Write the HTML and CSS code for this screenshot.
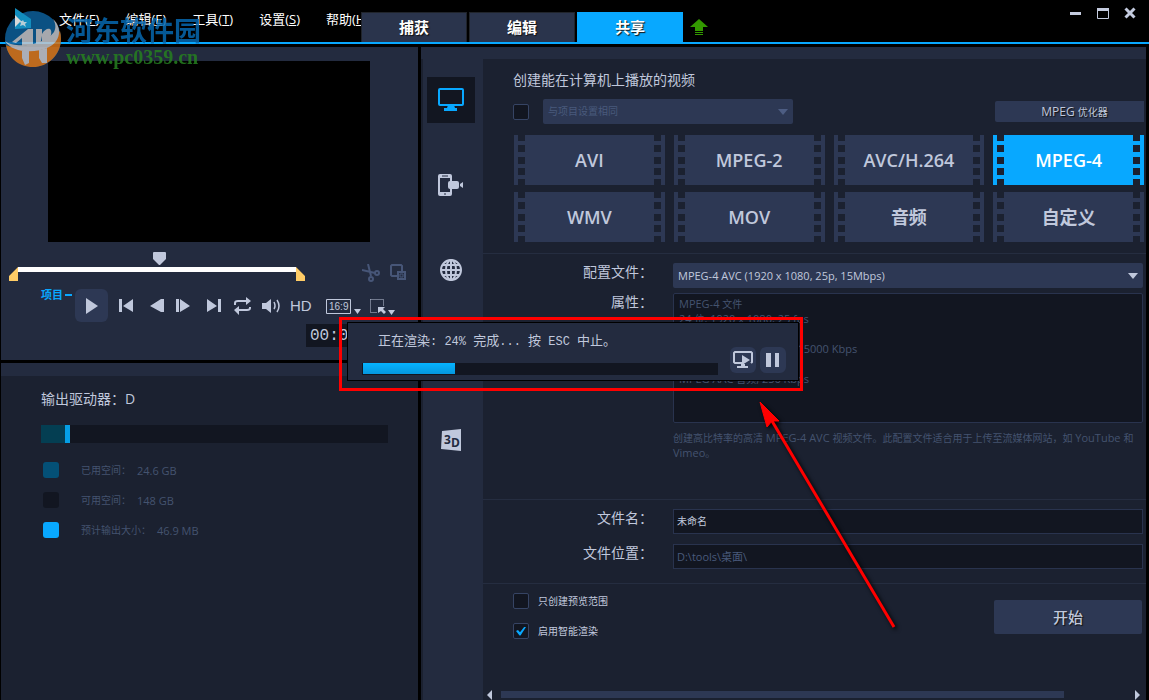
FILE: index.html
```html
<!DOCTYPE html>
<html lang="zh-CN">
<head>
<meta charset="utf-8">
<title>共享</title>
<link rel="stylesheet" href="styles.css">
</head>
<body>
<div class="app">
  <header class="topbar">
    <nav class="menu">
      <button>文件(<u>F</u>)</button>
      <button>编辑(<u>E</u>)</button>
      <button>工具(<u>T</u>)</button>
      <button>设置(<u>S</u>)</button>
      <button>帮助(<u>H</u>)</button>
    </nav>
    <div class="tabs">
      <button class="tab">捕获</button>
      <button class="tab">编辑</button>
      <button class="tab active">共享</button>
      <svg class="upgrade" width="18" height="18" viewBox="0 0 18 18"><path d="M9 0 18 8H13V12H5V8H0ZM5 13H13V14H5ZM5 15H13V16H5Z" fill="#339900"/></svg>
    </div>
    <div class="window-buttons">
      <button aria-label="最小化"><svg width="12" height="12"><path d="M0 5H11V8H0Z" fill="#c4cbdf"/></svg></button>
      <button aria-label="最大化"><svg width="12" height="12"><path d="M.5 1.500H11.500V11.500H.5Z" fill="none" stroke="#c4cbdf"/><path d="M0 1H12V4H0Z" fill="#c4cbdf"/></svg></button>
      <button aria-label="关闭"><svg width="12" height="12"><path d="M1.500 1.500 10.500 10.500M10.500 1.500 1.500 10.500" stroke="#c4cbdf" stroke-width="3"/></svg></button>
    </div>
    <div class="watermark">
      <svg width="58" height="62" viewBox="0 0 58 62">
        <circle cx="28" cy="31" r="28" fill="#0d609b"/>
        <path d="M1 37C14 43 40 39 55 23C60 43 45 59 28 59C13 59 3 49 1 37Z" fill="#d97519"/>
        <path d="M10 0 26 11V20L10 21Z" fill="#16a6e0"/><path d="M10 7 16 13 10 19Z" fill="#fff"/>
        <path d="M0 33C10 41 38 38 49 24C51 20 51 16 48 11C58 20 55 34 44 39C30 46 7 45 0 33Z" fill="#c3c6cc"/>
        <path d="M7 34 23 21H28V37L17 38V30L11 35ZM17 43H24V55L20 57 17 50ZM31 21H37V26C40 20 48 18 46 27L43 34 37 36V28L35 37H31ZM34 42 42 40V55H37L34 50Z" fill="#c3c6cc"/>
        <path d="m18 12 1 2 3 0-2 2 1 3-3-2-3 1 1-3-2-2 3 0Z" fill="#d5f2fd"/>
      </svg>
      <div class="watermark-text"><span class="site-name">河东软件园</span><span class="site-url">www.pc0359.cn</span></div>
    </div>
  </header>

  <div class="workspace">
    <div class="left">
      <section class="preview">
        <div class="screen"></div>
        <div class="trim">
          <svg class="trim-range" width="296" height="30" viewBox="0 0 296 30"><path d="M9 15H287V20H9Z" fill="#fff"/><path d="M9 15V29H0V24ZM287 15V29H296V24Z" fill="#fc6"/><path d="M144 1Q144 0 145 0H156Q157 0 157 1V7L151 13H150L144 7Z" fill="#c0c8dc"/></svg>
          <div class="trim-tools">
            <svg width="18" height="18" viewBox="0 0 18 18" fill="none" stroke="#475678" stroke-width="2"><path d="M6 0 9 12M0 6 13 9"/><circle cx="9" cy="15" r="2"/><circle cx="15" cy="9" r="2"/></svg>
            <svg width="17" height="17" viewBox="0 0 17 17" fill="none" stroke="#475678" stroke-width="2"><path d="M7 12H2L1 11V2L2 1H11L12 2V7"/><path d="M8 8H15V15H8Z"/><path d="M10 10H13V13H10Z" stroke-width="1"/></svg>
          </div>
        </div>
        <div class="transport">
          <span class="mode">项目</span><i class="mode-dash"></i>
          <button class="play" aria-label="播放"><svg width="12" height="16"><path d="M0 0 12 8 0 16Z" fill="#c0c8dc"/></svg></button>
          <svg class="controls" width="300" height="34" viewBox="0 0 300 34" fill="#c0c8dc">
            <path d="M11 10H14V23H11ZM25 10V23L15 17ZM42 17 53 10V23ZM53 10H56V23H53ZM68 10H71V23H68ZM72 10 82 17 72 23ZM99 10 109 17 99 23ZM110 10H113V23H110Z"/>
            <path d="M127 16V14Q127 12 130 12H139M142 18V19Q142 21 139 21H130" fill="none" stroke="#c0c8dc" stroke-width="2"/><path d="m138 8 5 4-5 4ZM131 17 126 21 131 26Z"/>
            <path d="M154 14H158L163 10V24L158 20H154Z"/><path d="M166 13Q168 17 166 20M169 11Q173 17 169 23" fill="none" stroke="#c0c8dc" stroke-width="1.500"/>
            <path d="M218.500 10.500H242.500V24.500H218.500Z" fill="none" stroke="#c0c8dc"/>
            <path d="M246 20H253L249.500 25ZM280 21H287L283.500 26Z"/>
            <path d="M262.500 10.500H275.500V17M262.500 10.500V23.500H269" fill="none" stroke="#c0c8dc" stroke-dasharray="1 1"/><path d="M270 18H277L275 20 278 23 276 25 273 22 270 24Z"/>
            <text x="182" y="22" font-size="15">HD</text><text x="221" y="21" font-size="10">16:9</text>
          </svg>
        </div>
        <div class="timecode">00:00:00</div>
      </section>
      <section class="drive">
        <div class="drive-head"></div>
        <h2>输出驱动器：<span>D</span></h2>
        <div class="drive-bar"><i style="width:7%"></i><b></b></div>
        <ul>
          <li><i class="used"></i>已用空间：<span>24.6 GB</span></li>
          <li><i class="free"></i>可用空间：<span>148 GB</span></li>
          <li><i class="estimated"></i>预计输出大小：<span>46.9 MB</span></li>
        </ul>
      </section>
    </div>

    <div class="right">
      <nav class="targets">
        <button class="selected" aria-label="计算机"><svg width="26" height="24" viewBox="0 0 26 24"><rect x="1" y="1" width="24" height="16" rx="1" fill="none" stroke="#08a8ff" stroke-width="2"/><path d="M10 17H16L17 20H19V23H6V20H9Z" fill="#08a8ff"/></svg></button>
        <button aria-label="设备"><svg width="26" height="23" viewBox="0 0 26 23"><path d="M2 0H12Q14 0 14 2V7H12V4H2V18H12V15H14V20Q14 22 12 22H2Q0 22 0 20V2Q0 0 2 0Z" fill="#c0c8dc"/><rect x="10" y="7" width="11" height="8" rx="2" fill="#c0c8dc"/><path d="M22 10 25 8V14L22 12Z" fill="#c0c8dc"/><path d="M4 2H10M6 20H8" stroke="#232b3f"/></svg></button>
        <button aria-label="网络"><svg width="22" height="22" viewBox="0 0 22 22" fill="none" stroke="#c0c8dc" stroke-width="2"><circle cx="11" cy="11" r="10"/><ellipse cx="11" cy="11" rx="5" ry="10"/><path d="M11 1V21M1 11H21M3 6H19M3 16H19"/></svg></button>
        <button aria-label="DVD"></button>
        <button aria-label="3D 影片"><svg width="20" height="22" viewBox="0 0 20 22"><path d="M1 2 20 0V22L0 20Z" fill="#c0c8dc"/><text x="3" y="15" class="three-d">3</text><text x="10" y="18" class="three-d">D</text></svg></button>
      </nav>
      <main>
        <section class="formats">
          <h1>创建能在计算机上播放的视频</h1>
          <div class="same-row">
            <input type="checkbox" aria-label="与项目设置相同">
            <div class="select small dim"><select aria-label="项目设置" disabled><option>与项目设置相同</option></select></div>
            <button class="optimizer">MPEG <span class="cn">优化器</span></button>
          </div>
          <div class="film-grid">
            <button class="film">AVI</button><button class="film">MPEG-2</button><button class="film">AVC/H.264</button><button class="film on">MPEG-4</button>
            <button class="film">WMV</button><button class="film">MOV</button><button class="film">音频</button><button class="film">自定义</button>
          </div>
        </section>
        <section class="profile form">
          <label for="profile">配置文件：</label>
          <div class="select"><select id="profile"><option>MPEG-4 AVC (1920 x 1080, 25p, 15Mbps)</option></select></div>
          <span class="label">属性：</span>
          <div class="properties">MPEG-4 <span class="cn">文件</span><br>24 <span class="cn">位</span>, 1920 x 1080, 25 fps<br><br><span class="cn">视频数据速率：可变 (最高</span> 15000 Kbps<br><br>MPEG AAC <span class="cn">音频</span>, 256 Kbps</div>
          <p><span class="cn">创建高比特率的高清</span> MPEG-4 AVC <span class="cn">视频文件。此配置文件适合用于上传至流媒体网站，如</span> YouTube <span class="cn">和</span> Vimeo<span class="cn">。</span></p>
        </section>
        <section class="file form">
          <label for="name">文件名：</label><input id="name" class="cn" type="text" value="未命名">
          <label for="location">文件位置：</label><input id="location" class="dim" type="text" value="D:\tools\桌面\">
        </section>
        <section class="render">
          <div class="options">
            <label><input type="checkbox"><span>只创建预览范围</span></label>
            <label><input type="checkbox" checked><span>启用智能渲染</span></label>
          </div>
          <button class="start">开始</button>
        </section>
        <div class="scrollbar"><svg width="6" height="10"><path d="M5 0V10L0 5Z" fill="#c0c8dc"/></svg><div class="track"><i></i></div><svg width="6" height="10"><path d="M0 0V10L5 5Z" fill="#c0c8dc"/></svg></div>
      </main>
    </div>
  </div>

  <div class="callout">
    <div class="dialog" role="dialog" aria-label="正在渲染">
      <div class="status">
        <p><span>正在渲染</span>: 24% <span>完成</span>... <span>按</span> ESC <span>中止。</span></p>
        <div class="progress"><i style="width:26%"></i></div>
      </div>
      <button aria-label="预览"><svg width="20" height="18" viewBox="0 0 20 18"><path d="M11 12H2L1 11V2L2 1H18L19 2V11L18 12" fill="none" stroke="#c0c8dc" stroke-width="2"/><path d="M9 4 17 9 9 14ZM8 13H12V15H15V17H4V15H8Z" fill="#c0c8dc"/></svg></button>
      <button aria-label="暂停"><svg width="14" height="14"><path d="M0 0H5V14H0ZM9 0H13V14H9Z" fill="#c0c8dc"/></svg></button>
    </div>
  </div>
  <svg class="arrow" width="140" height="230" viewBox="0 0 140 230"><path d="M13 20 135 226" stroke="#f00" stroke-width="3"/><path d="M1 1 20 20 13 20 8 26Z" fill="#f00" stroke="#f00"/></svg>
</div>
</body>
</html>
```

FILE: styles.css
```css
:root {
  --panel: #232b3f;
  --dark: #1b2130;
  --control: #2d3854;
  --well: #121621;
  --text: #c0c8dc;
  --dim: #44536f;
  --blue: #08a8ff;
}
* { box-sizing: border-box; margin: 0; padding: 0; }
body { background: #000; color: var(--text); font: 11px/15px "Open Sans", "Noto Sans CJK SC", sans-serif; }
button, input, select { font: inherit; color: inherit; border: 0; background: none; }
svg { display: block; flex: none; }
i { display: block; }
.cn { font-size: 10px; line-height: 10px; }
.app { position: relative; display: flex; flex-direction: column; min-height: 100vh; overflow: hidden; }

.topbar { position: relative; display: flex; height: 44px; border-bottom: 2px solid var(--blue); }
.menu { display: flex; flex: none; width: 361px; height: 38px; padding-left: 59px; gap: 26px; overflow: hidden; color: #fff; font-size: 13px; }
.menu button { flex: none; white-space: nowrap; }
.tabs { display: flex; gap: 2px; align-items: flex-end; }
.tab { width: 106px; height: 30px; background: #2a344c; border: 1px solid #20242b; border-bottom: 0; color: #fff; font-size: 15px; font-weight: bold; text-shadow: 1px 1px 1px #111; }
.tab.active { background: var(--blue); border-color: var(--blue); }
.upgrade { margin: 0 0 5px 5px; }
.window-buttons { display: flex; gap: 15px; margin-left: auto; padding: 6px 13px 0 0; height: 20px; }
.watermark { position: absolute; left: 5px; top: 8px; display: flex; gap: 3px; z-index: 2; opacity: .85; }
.watermark-text { display: flex; flex-direction: column; padding-top: 6px; font-weight: bold; }
.site-name { color: #0668b0; font-size: 27px; line-height: 33px; }
.site-url { color: #268020; font-family: "Liberation Serif", serif; font-size: 20px; line-height: 20px; }

.workspace { display: grid; grid-template-columns: 417fr 725fr; gap: 3px; flex: 1; padding: 3px 3px 0 1px; }
.left { display: flex; flex-direction: column; gap: 3px; min-width: 0; }
.preview { display: flex; flex-direction: column; height: 313px; background: var(--panel); padding-top: 14px; }
.screen { height: 181px; margin: 0 48px 0 47px; background: #000; }
.trim { display: flex; justify-content: space-between; padding: 10px 11px 0 8px; }
.trim-tools { display: flex; gap: 10px; padding-top: 12px; }
.transport { display: flex; align-items: flex-start; padding-left: 40px; height: 42px; margin-top: 7px; }
.mode { flex: none; white-space: nowrap; color: var(--blue); font-size: 11px; font-weight: bold; line-height: 12px; }
.mode-dash { flex: none; width: 7px; height: 2px; margin: 5px 3px 0 2px; background: var(--blue); }
.play { display: grid; place-items: center; flex: none; width: 33px; height: 33px; border-radius: 6px; background: var(--control); }
.controls { font-family: "Liberation Sans", sans-serif; }
.timecode { align-self: flex-end; width: 112px; height: 23px; margin-top: -7px; padding-left: 4px; background: var(--well); font: 16px/24px "Liberation Mono", monospace; }

.drive { flex: 1; background: var(--dark); }
.drive-head { height: 13px; background: var(--panel); }
.drive h2 { padding: 13px 40px 0; font-size: 14px; line-height: 20px; font-weight: normal; }
.drive-bar { display: flex; height: 18px; margin: 16px 30px 12px 40px; background: var(--well); }
.drive-bar i { background: #043e52; }
.drive-bar b { width: 5px; background: #059fe6; }
.drive ul { list-style: none; padding-left: 42px; color: var(--dim); }
.drive li { display: flex; align-items: center; height: 30px; font-size: 10px; }
.drive li i { width: 16px; height: 16px; margin-right: 22px; border-radius: 3px; }
.drive li span { margin-left: 6px; font-size: 11px; }
.used { background: #045076; }
.free { background: var(--well); }
.estimated { background: var(--blue); }

.right { display: flex; min-width: 0; background: var(--dark); border-top: 12px solid var(--panel); }
.targets { flex: none; width: 60px; margin-left: 2px; padding-top: 18px; background: var(--panel); }
.targets button { display: grid; place-items: center; width: 48px; height: 46px; margin: 0 4px 39px; }
.targets .selected { background: var(--well); }
.three-d { font: bold 12px "Open Sans", sans-serif; fill: var(--panel); }
main { display: flex; flex-direction: column; flex: 1; min-width: 0; }
.profile, .file, .render { border-top: 1px solid #252d40; }
.formats { padding: 11px 2px 11px 30px; }
h1 { font-size: 14px; line-height: 20px; font-weight: normal; }
.same-row { display: flex; align-items: center; margin: 9px 0 11px; }
input[type="checkbox"] { appearance: none; display: grid; place-items: center; flex: none; width: 16px; height: 16px; border: 1px solid #364464; border-radius: 2px; background: var(--well); }
input[type="checkbox"]:checked::before { content: ""; width: 10px; height: 9px; background: var(--blue); clip-path: polygon(0 50%, 20% 40%, 40% 65%, 85% 0, 100% 5%, 45% 100%, 35% 100%); }
.select { position: relative; height: 25px; border-radius: 2px; background: var(--control); }
.select select { appearance: none; width: 100%; height: 25px; padding: 0 22px 0 5px; opacity: 1; }
.select::after { content: ""; position: absolute; right: 5px; top: 10px; border: 5px solid transparent; border-top: 6px solid var(--text); border-bottom: 0; }
.select.small { width: 250px; margin-left: 14px; font-size: 10px; }
.select.dim::after { border-top-color: #4d5d83; }
.dim { color: #495a7c; }
.optimizer { width: 149px; height: 21px; margin-left: auto; padding-left: 10px; border-radius: 2px 0 0 2px; background: var(--control); font-size: 12px; text-shadow: 1px 1px 1px #111; }
.film-grid { display: grid; grid-template-columns: repeat(4, 1fr); gap: 7px 9px; padding-left: 1px; }
.film { position: relative; height: 50px; background: var(--control); font-size: 18px; font-weight: 600; }
.film.on { background: var(--blue); color: #fff; }
.film::before, .film::after { content: ""; position: absolute; top: 0; bottom: 0; width: 7px; background: linear-gradient(var(--dark) 6px, transparent 6px 10px, var(--dark) 10px 17px, transparent 17px 22px, var(--dark) 22px 29px, transparent 29px 33px, var(--dark) 33px 40px, transparent 40px 44px, var(--dark) 44px); }
.film::before { left: 4px; }
.film::after { right: 4px; }

.form { display: grid; grid-template-columns: 160px 1fr; column-gap: 30px; padding-right: 3px; }
.form > label, .label { justify-self: end; font-size: 14px; line-height: 18px; margin-right: -10px; white-space: nowrap; }
.profile { height: 246px; padding-top: 9px; grid-template-rows: 25px 130px auto; row-gap: 5px; }
.properties { padding: 2px 5px; border: 1px solid #29334e; border-radius: 2px; background: var(--well); color: var(--dim); }
.profile p { grid-column: 2; margin-top: 2px; color: var(--dim); }
.file { height: 84px; padding-top: 9px; grid-template-rows: 25px 25px; row-gap: 10px; }
.file input { width: 100%; height: 25px; padding: 0 3px 2px; border: 1px solid #29334e; background: var(--well); }
.render { display: flex; justify-content: space-between; padding: 9px 4px 0 30px; }
.options { display: flex; flex-direction: column; gap: 14px; }
.options label { display: flex; align-items: center; gap: 9px; height: 16px; font-size: 10px; }
.start { width: 148px; height: 34px; margin-top: 7px; border-radius: 2px; background: var(--control); font-size: 15px; font-weight: 500; text-shadow: 1px 1px 1px #111; }
.scrollbar { display: flex; align-items: center; gap: 8px; margin-top: auto; padding: 0 5px 0 4px; height: 11px; }
.track { flex: 1; }
.track i { width: 90%; height: 7px; background: var(--control); }

.callout { position: absolute; left: 339px; top: 317px; width: 464px; height: 74px; padding: 2px 1px 8px 5px; border: 3px solid #f00; }
.dialog { display: flex; height: 59px; padding: 0 12px 0 14px; border: 1px solid #000; background: var(--panel); }
.status { flex: 1; margin-right: 8px; padding-top: 11px; }
.status p { padding-left: 16px; font: 12px/16px "Liberation Mono", "Noto Sans CJK SC", monospace; white-space: nowrap; }
.status p span { font-size: 13px; }
.progress { height: 12px; margin-top: 13px; padding-left: 1px; background: var(--well); }
.progress i { height: 11px; background: linear-gradient(#05b4ff, #0597df); }
.dialog button { display: grid; place-items: center; width: 26px; height: 26px; margin: 24px 0 0 4px; border-radius: 6px; background: var(--control); }
.arrow { position: absolute; left: 759px; top: 401px; filter: drop-shadow(2px 2px 2px #000); }
```
